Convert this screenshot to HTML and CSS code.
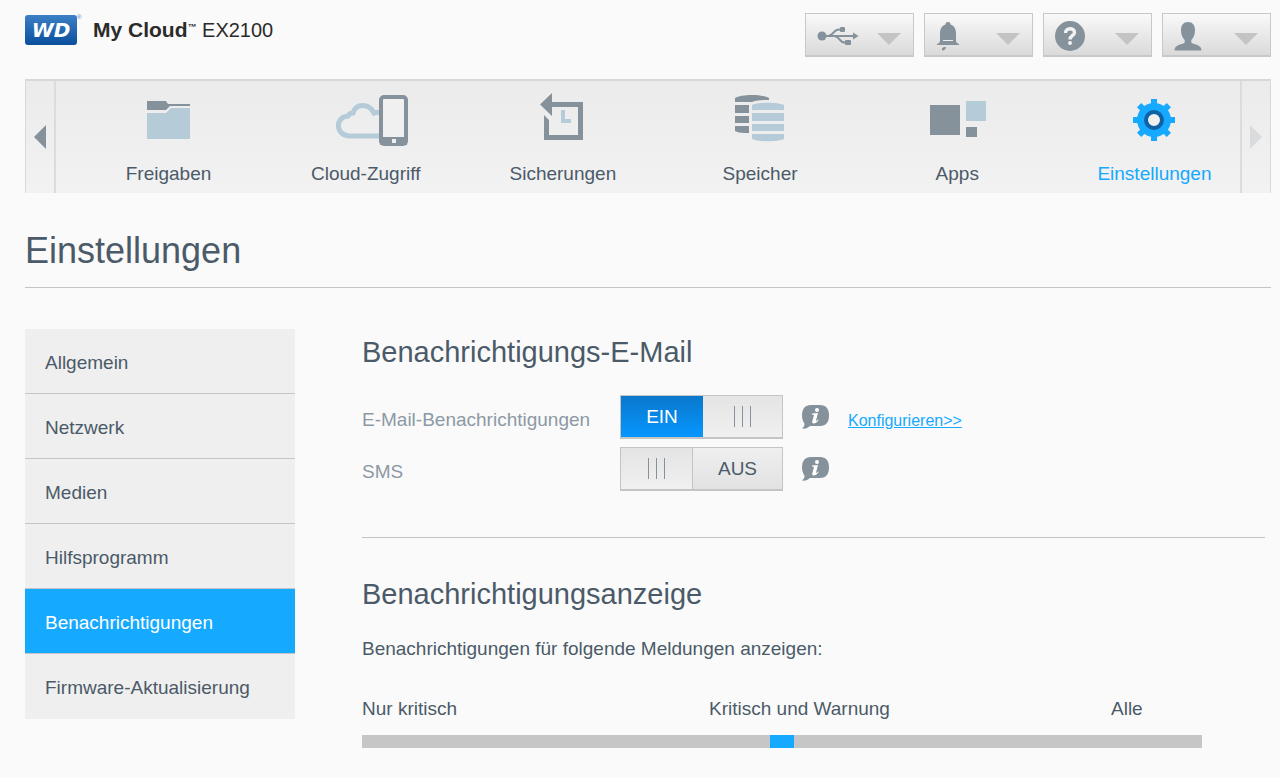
FILE: index.html
```html
<!DOCTYPE html>
<html lang="de">
    <head>
        <meta charset="utf-8">
        <title>My Cloud EX2100</title>
        <link rel="stylesheet" href="styles.css">
    </head>
<body>
    <header class="header">
        <div class="brand">
            <span class="logo">WD</span>
            <span class="reg">®</span>
            <span class="product"><b>My Cloud<span class="tm">™</span></b> EX2100</span>
        </div>
        <div class="tools">
            <button class="tool" type="button" aria-label="USB">
                <svg width="42" height="20" viewBox="0 0 42 20">
                    <g fill="none" stroke="#85929b" stroke-width="2">
                        <path d="M4 10H38"/>
                        <path d="M12 9.500C17 9.500 16 3.500 22 3.500H26"/>
                        <path d="M18 10.500C23 10.500 22 16.500 28 16.500H31"/>
                    </g>
                    <g fill="#85929b">
                        <circle cx="5" cy="10" r="4.500"/>
                        <path d="M36 6.500L41.500 10L36 13.500Z"/>
                        <rect x="23" y="1" width="5" height="5" rx="1"/>
                        <rect x="28" y="14" width="6" height="5" rx="1"/>
                    </g>
                </svg>
                <span class="caret"></span>
            </button>
            <button class="tool" type="button" aria-label="Warnungen">
                <svg width="24" height="30" viewBox="0 0 24 30">
                    <path fill="#85929b" d="M12 1C14 1 14.500 2 14.500 3.500C18 4.500 20 8 20 12V18.500H4V12C4 8 6 4.500 9.500 3.500C9.500 2 10 1 12 1Z"/>
                    <path fill="#85929b" d="M4 18H20V20C20 22 22 22 23.500 24H.5C2 22 4 22 4 20Z"/>
                    <path stroke="#eee" stroke-width="1" d="M7 19.500H17"/>
                    <path fill="#85929b" d="M6 29.500C5.500 27 7 25.500 10 26C10 28 8 30 6 29.500Z"/>
                </svg>
                <span class="caret"></span>
            </button>
            <button class="tool" type="button" aria-label="Hilfe">
                <svg width="30" height="30" viewBox="0 0 30 30">
                    <circle cx="15" cy="15" r="15" fill="#85929b"/>
                    <path fill="none" stroke="#f2f2f2" stroke-width="3.400" d="M10.500 12C10.500 6.500 19.500 6.500 19.500 11.500C19.500 14.500 15 14.500 15 18.500"/>
                    <circle cx="15" cy="22" r="2" fill="#f2f2f2"/>
                </svg>
                <span class="caret"></span>
            </button>
            <button class="tool" type="button" aria-label="Benutzer">
                <svg width="28" height="30" viewBox="0 0 28 30">
                    <path fill="#85929b" d="M14 1C18.500 1 21 4 21 9C21 13.500 19.500 17 17.300 19V21.500C18.500 23.500 27.500 23 27.500 29.500H.5C.5 23 9.500 23.500 10.700 21.500V19C8.500 17 7 13.500 7 9C7 4 9.500 1 14 1Z"/>
                </svg>
                <span class="caret"></span>
            </button>
        </div>
    </header>

    <nav class="nav">
        <button class="nav-arrow prev" type="button" aria-label="Zurück">
            <svg width="12" height="24" viewBox="0 0 12 24"><path fill="#85929b" d="M12 0V24L0 12Z"/></svg>
        </button>
        <div class="nav-items">
            <a class="nav-item" href="#">
                <svg width="44" height="52" viewBox="0 0 44 52">
                    <path fill="#85929b" d="M0 6H19L21 9H43V11H23L19 15H0Z"/>
                    <path fill="#b5cbd8" d="M0 18H19L24 13H43V44H0Z"/>
                </svg>
                Freigaben
            </a>
            <a class="nav-item" href="#">
                <svg class="cloud" width="72" height="52" viewBox="0 0 72 52">
                    <path fill="none" stroke="#b5cbd8" stroke-width="5" d="M46 41H13C-1 40 -1 22 12 21C13 19 14 18 17 18C20 8 33 8 38 18C40 17 43 17 46 19"/>
                    <rect x="45" y="2" width="25" height="47" rx="3" fill="#f0f0f0" stroke="#85929b" stroke-width="4"/>
                    <path fill="#85929b" d="M44 42H71V50H44Z"/>
                    <rect x="56" y="44" width="4" height="4" fill="#f0f0f0"/>
                </svg>
                Cloud-Zugriff
            </a>
            <a class="nav-item" href="#">
                <svg width="44" height="52" viewBox="0 0 44 52">
                    <path fill="#85929b" d="M-1 9.500L11 -2V7H42V45H3V20L8 25V40H37V12H11V21Z"/>
                    <path fill="#b5cbd8" d="M20 15H24V24H30V28H20Z"/>
                </svg>
                Sicherungen
            </a>
            <a class="nav-item" href="#">
                <svg width="50" height="52" viewBox="0 0 50 52">
                    <g fill="#85929b">
                        <path d="M0 3C6 -1 28 -1 34 3V5C27 5 22 5 17 7H0Z"/>
                        <path d="M0 10H14V18H0ZM0 21H14V28H0ZM0 31H14V38C8 38 4 38 0 36Z"/>
                    </g>
                    <g fill="#b5cbd8">
                        <path d="M17 10C23 7 43 7 49 10V15H17Z"/>
                        <path d="M17 18H49V26H17ZM17 29H49V36H17ZM17 39H49V44C43 47 23 47 17 44Z"/>
                    </g>
                </svg>
                Speicher
            </a>
            <a class="nav-item" href="#">
                <svg width="54" height="52" viewBox="0 0 54 52">
                    <path fill="#85929b" d="M0 10H30V40H0ZM36 32H47V42H36Z"/>
                    <path fill="#b5cbd8" d="M36 6H56V26H36Z"/>
                </svg>
                Apps
            </a>
            <a class="nav-item active" href="#">
                <svg width="44" height="52" viewBox="-22 -25 44 52">
                    <g fill="#15a9ff">
                        <circle r="17"/>
                        <rect x="-3" y="-21" width="6" height="42"/>
                        <rect x="-21" y="-3" width="42" height="6"/>
                        <rect x="-3" y="-21" width="6" height="42" transform="rotate(45)"/>
                        <rect x="-3" y="-21" width="6" height="42" transform="rotate(-45)"/>
                    </g>
                    <circle r="8" fill="#f0f0f0" stroke="#0f62a4" stroke-width="4"/>
                </svg>
                Einstellungen
            </a>
        </div>
        <button class="nav-arrow next" type="button" aria-label="Weiter">
            <svg width="12" height="24" viewBox="0 0 12 24"><path fill="#d9dbdd" d="M0 0V24L12 12Z"/></svg>
        </button>
    </nav>

    <h1>Einstellungen</h1>

    <div class="content">
        <nav class="sidebar">
            <a href="#">Allgemein</a>
            <a href="#">Netzwerk</a>
            <a href="#">Medien</a>
            <a href="#">Hilfsprogramm</a>
            <a class="selected" href="#">Benachrichtigungen</a>
            <a href="#">Firmware-Aktualisierung</a>
        </nav>

        <main class="main">
            <h2>Benachrichtigungs-E-Mail</h2>
            <div class="row">
                <label class="row-label" for="mailSwitch">E-Mail-Benachrichtigungen</label>
                <label class="switch">
                    <input type="checkbox" id="mailSwitch" checked>
                    <span class="on">EIN</span>
                    <span class="grip"><i></i><i></i><i></i></span>
                    <span class="off">AUS</span>
                </label>
                <button class="info" type="button" aria-label="Info">
                    <svg width="27" height="24" viewBox="0 0 27 24">
                        <path fill="#85929b" d="M9 0H18C24 0 27 4 27 10.500C27 17 24 21 18 21H8C6 23 3 24 0 23.500C2 22 2.500 20.500 2.500 18.500C1 16.500 0 14 0 10.500C0 4 3 0 9 0Z"/>
                        <circle cx="15" cy="5" r="2" fill="#fff"/>
                        <path fill="#fff" d="M10 8.500L16 8L14 15.500C14 16.500 15 15.500 16 14.500L16.500 15C15 17.500 13.500 18.500 11.500 18.500C10 18.500 10 17 10.500 15.500L12 10L10 9.500Z"/>
                    </svg>
                </button>
                <a class="configure" href="#">Konfigurieren&gt;&gt;</a>
            </div>
            <div class="row">
                <label class="row-label" for="smsSwitch">SMS</label>
                <label class="switch">
                    <input type="checkbox" id="smsSwitch">
                    <span class="on">EIN</span>
                    <span class="grip"><i></i><i></i><i></i></span>
                    <span class="off">AUS</span>
                </label>
                <button class="info" type="button" aria-label="Info">
                    <svg width="27" height="24" viewBox="0 0 27 24">
                        <path fill="#85929b" d="M9 0H18C24 0 27 4 27 10.500C27 17 24 21 18 21H8C6 23 3 24 0 23.500C2 22 2.500 20.500 2.500 18.500C1 16.500 0 14 0 10.500C0 4 3 0 9 0Z"/>
                        <circle cx="15" cy="5" r="2" fill="#fff"/>
                        <path fill="#fff" d="M10 8.500L16 8L14 15.500C14 16.500 15 15.500 16 14.500L16.500 15C15 17.500 13.500 18.500 11.500 18.500C10 18.500 10 17 10.500 15.500L12 10L10 9.500Z"/>
                    </svg>
                </button>
            </div>

            <hr>

            <h2>Benachrichtigungsanzeige</h2>
            <label class="hint" for="level">Benachrichtigungen für folgende Meldungen anzeigen:</label>
            <div class="level">
                <div class="level-labels">
                    <span>Nur kritisch</span>
                    <span>Kritisch und Warnung</span>
                    <span>Alle</span>
                </div>
                <input class="slider" type="range" id="level" min="0" max="2" value="1">
            </div>
        </main>
    </div>
</body>
</html>
```

FILE: styles.css
```css
* {
  box-sizing: border-box;
}

body {
  margin: 0;
  padding: 0 9px 0 25px;
  font-family: "Liberation Sans", Arial, sans-serif;
  font-size: 19px;
  line-height: 24px;
  color: #4b5a68;
  background-color: #fafafa;
}

a {
  color: inherit;
  text-decoration: none;
}

button {
  padding: 0;
  border: none;
  background: none;
  cursor: pointer;
}

svg {
  display: block;
}

/* Header */
.header {
  display: flex;
  justify-content: space-between;
  padding-top: 13px;
  height: 79px;
}

.brand {
  display: flex;
  align-items: center;
  height: 34px;
}

.logo {
  width: 52px;
  height: 30px;
  border-radius: 3px;
  background: linear-gradient(#3c80c6, #0a4f9c);
  color: #fff;
  font-family: "DejaVu Sans", sans-serif;
  font-size: 20px;
  font-weight: bold;
  font-style: italic;
  line-height: 30px;
  text-align: center;
}

.reg {
  align-self: flex-start;
  width: 16px;
  font-size: 6px;
  line-height: 8px;
  color: #3c80c6;
}

.product {
  font-size: 20px;
  color: #2b2b2b;
}

.product b {
  font-size: 21px;
}

.product .tm {
  font-size: 9px;
  line-height: 10px;
  vertical-align: 7px;
}

.tools {
  display: flex;
  gap: 10px;
}

.tool {
  display: flex;
  align-items: center;
  justify-content: space-between;
  width: 109px;
  height: 44px;
  padding: 2px 12px 0 11px;
  border: 1px solid #c8c8c8;
  border-bottom-width: 2px;
  background: linear-gradient(#f9f9f9, #dadada);
}

.caret {
  margin-top: 6px;
  border: 12px solid transparent;
  border-top-color: #c4c4c4;
  border-bottom: none;
}

/* Main navigation */
.nav {
  display: flex;
  height: 114px;
  border-top: 2px solid #d8d8d8;
  background: linear-gradient(#ebebeb, #f2f2f2);
}

.nav-arrow {
  display: flex;
  align-items: center;
  justify-content: center;
  width: 31px;
}

.prev {
  border-left: 1px solid #d8d8d8;
  border-right: 2px solid #dcdcdc;
}

.next {
  border-left: 2px solid #dcdcdc;
  border-right: 1px solid #d8d8d8;
}

.nav-items {
  flex: 1;
  display: flex;
  justify-content: space-between;
  padding: 14px 28px 0 55px;
}

.nav-item {
  display: flex;
  flex-direction: column;
  align-items: center;
  gap: 15px;
  width: 115px;
}

.nav-item svg {
  overflow: visible;
}

.cloud {
  margin-left: 12px;
}

.active {
  color: #15a9ff;
}

h1 {
  margin: 37px 0 0;
  padding-bottom: 15px;
  border-bottom: 1px solid #c4c4c4;
  font-size: 36px;
  font-weight: normal;
  line-height: 42px;
}

.content {
  display: flex;
  align-items: flex-start;
  gap: 67px;
  padding-top: 41px;
}

/* Sidebar */
.sidebar {
  width: 270px;
}

.sidebar a {
  display: block;
  padding: 4px 20px 0;
  border-bottom: 1px solid #c4c4c4;
  line-height: 60px;
  background-color: #efefef;
}

.sidebar a:last-child {
  border-bottom-color: #efefef;
}

.sidebar .selected {
  color: #fff;
  background-color: #15a9ff;
}

/* Settings */
.main {
  flex: 1;
  padding: 6px 6px 0 0;
}

h2 {
  margin: 0 0 26px;
  font-size: 29px;
  font-weight: normal;
  line-height: 34px;
}

.row {
  display: flex;
  align-items: center;
  height: 44px;
  margin-bottom: 8px;
}

.row-label {
  width: 258px;
  padding-top: 5px;
  color: #8c99a5;
}

.switch {
  display: flex;
  width: 163px;
  height: 44px;
  border: 1px solid #c4c4c4;
  border-bottom-width: 2px;
  line-height: 41px;
  text-align: center;
  cursor: pointer;
}

.switch input {
  position: absolute;
  opacity: 0;
}

.on {
  display: none;
  width: 82px;
  color: #fff;
  background: linear-gradient(#0a78cc, #0696ff);
}

.off {
  flex: 1;
  border-left: 1px solid #c4c4c4;
  background: linear-gradient(#efefef, #e2e2e2);
}

.grip {
  display: flex;
  align-items: center;
  justify-content: center;
  gap: 7px;
  width: 71px;
  background: linear-gradient(#e4e4e4, #f0f0f0);
}

.grip i {
  width: 1px;
  height: 21px;
  background-color: #85929b;
}

.switch input:checked ~ .on {
  display: block;
}

.switch input:checked ~ .grip {
  flex: 1;
}

.switch input:checked ~ .off {
  display: none;
}

.info {
  margin: 0 19px;
}

.configure {
  padding-top: 7px;
  font-size: 16px;
  color: #15a9ff;
  text-decoration: underline;
}

hr {
  margin: 46px 0 39px;
  border: none;
  border-top: 1px solid #c4c4c4;
}

.hint {
  display: block;
}

.level {
  max-width: 840px;
  margin-top: 36px;
}

.level-labels {
  display: grid;
  grid-template-columns: 347fr 402fr 91fr;
  margin-bottom: 14px;
}

.slider {
  display: block;
  width: 100%;
  height: 13px;
  margin: 0;
  background-color: #c6c6c6;
  -webkit-appearance: none;
  appearance: none;
}

.slider::-webkit-slider-thumb {
  width: 24px;
  height: 13px;
  background-color: #15a9ff;
  -webkit-appearance: none;
}
```
